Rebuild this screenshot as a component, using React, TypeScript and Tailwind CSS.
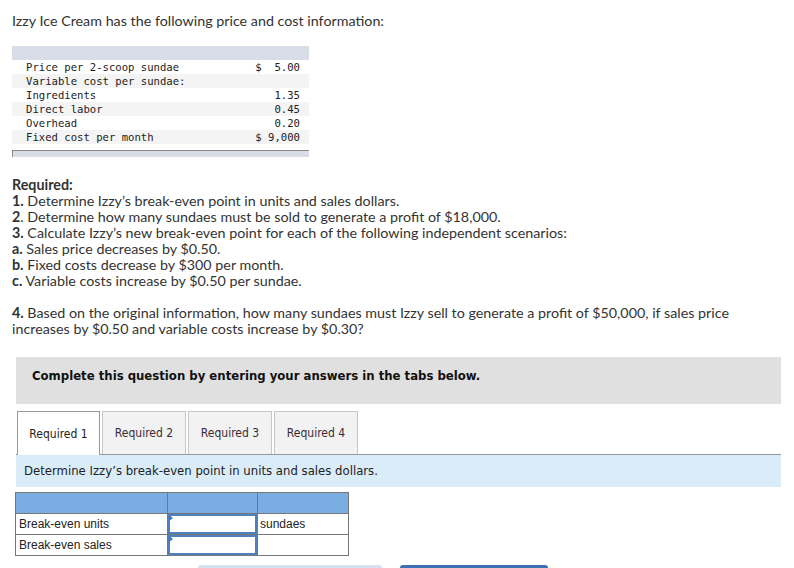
const costRows = [
  { label: 'Price per 2-scoop sundae', value: '$  5.00' },
  { label: 'Variable cost per sundae:', value: '' },
  { label: 'Ingredients', value: '1.35' },
  { label: 'Direct labor', value: '0.45' },
  { label: 'Overhead', value: '0.20' },
  { label: 'Fixed cost per month', value: '$ 9,000' },
]

const tabs = ['Required 1', 'Required 2', 'Required 3', 'Required 4']

function CostTable() {
  return (
    <div className="ml-3 mt-[17px] w-[297px] font-['DejaVu_Sans_Mono',monospace] text-[10.6px] leading-[14px] text-[#222]">
      <div className="h-[14px] bg-[#d9dde8]" />
      {costRows.map((row, i) => (
        <div
          key={row.label}
          className={`flex h-[14px] justify-between pl-[14px] pr-[9px] ${i % 2 === 1 ? 'bg-[#f4f4f4]' : 'bg-white'}`}
        >
          <span>{row.label}</span>
          <span className="whitespace-pre">{row.value}</span>
        </div>
      ))}
      <div className="mt-[6px] h-[7px] border-l border-t border-[#8a8a8a] bg-[#d9dde8]" />
    </div>
  )
}

function Required() {
  return (
    <div className="mt-5 w-[770px] pl-3 text-[14.3px] leading-4">
      <p className="font-bold">Required:</p>
      <p><b>1.</b> Determine Izzy’s break-even point in units and sales dollars.</p>
      <p><b>2</b>. Determine how many sundaes must be sold to generate a profit of $18,000.</p>
      <p><b>3.</b> Calculate Izzy’s new break-even point for each of the following independent scenarios:</p>
      <p><b>a.</b> Sales price decreases by $0.50.</p>
      <p><b>b.</b> Fixed costs decrease by $300 per month.</p>
      <p><b>c.</b> Variable costs increase by $0.50 per sundae.</p>
      <p className="mt-4">
        <b>4.</b> Based on the original information, how many sundaes must Izzy sell to generate a profit of $50,000, if sales price increases by $0.50 and variable costs increase by $0.30?
      </p>
    </div>
  )
}

function InputCell() {
  return (
    <div className="relative border-b border-r border-[#777] bg-white">
      <div className="h-full w-full border-2 border-[#4f80be]" />
      <span className="absolute left-[1px] top-[1px] h-0 w-0 border-y-[3px] border-l-[4px] border-y-transparent border-l-[#3f74b8]" />
    </div>
  )
}

function AnswerTable() {
  return (
    <div className="ml-[15px] mt-[5px] grid w-fit grid-cols-[152px_90px_91px] grid-rows-[21px_21px_21px] border-l border-t border-[#777] font-['Liberation_Sans',Arial,sans-serif] text-[12px] leading-[20px] text-[#222]">
      <div className="border-b border-r border-[#777] bg-[#7aaee3]" />
      <div className="border-b border-r border-[#777] bg-[#7aaee3]" />
      <div className="border-b border-r border-[#777] bg-[#7aaee3]" />
      <div className="border-b border-r border-[#777] pl-[3px]">Break-even units</div>
      <InputCell />
      <div className="border-b border-r border-[#777] pl-[2px]">sundaes</div>
      <div className="border-b border-r border-[#777] pl-[3px]">Break-even sales</div>
      <InputCell />
      <div className="border-b border-r border-[#777]" />
    </div>
  )
}

export default function App() {
  return (
    <div className="h-[568px] w-[794px] overflow-hidden bg-white font-['Lato',sans-serif] text-[#333]">
      <p className="pl-3 pt-[13px] text-[14.3px] leading-4">Izzy Ice Cream has the following price and cost information:</p>
      <CostTable />
      <Required />

      <div className="ml-4 mt-5 h-[47px] w-[765px] bg-[#e0e0e0] pl-4 pt-[11px] font-['DejaVu_Sans_Condensed','DejaVu_Sans',sans-serif] text-[13px] font-bold leading-4 text-[#111]">
        Complete this question by entering your answers in the tabs below.
      </div>

      <div className="ml-4 mt-[7px] flex w-[765px] items-start gap-[2px] border-b border-[#999] pl-px font-['DejaVu_Sans_Condensed','DejaVu_Sans',sans-serif] text-[12px]">
        {tabs.map((t, i) =>
          i === 0 ? (
            <div key={t} className="-mb-px flex h-[44px] w-[83px] items-center justify-center border-x border-t border-[#999] bg-white text-[#222]">
              {t}
            </div>
          ) : (
            <div key={t} className="flex h-[43px] w-[84px] items-center justify-center border-x border-t border-[#c6c6c6] bg-[#f2f2f2] text-[#3a2a36]">
              {t}
            </div>
          )
        )}
      </div>

      <div className="ml-4 flex h-[32px] w-[765px] items-center bg-[#dbecf9] pl-2 font-['DejaVu_Sans_Condensed','DejaVu_Sans',sans-serif] text-[13px] text-[#222]">
        Determine Izzy’s break-even point in units and sales dollars.
      </div>

      <AnswerTable />

      <div className="ml-[198px] mt-[9px] flex gap-[18px]">
        <div className="h-8 w-[184px] rounded-t-[3px] bg-[#d6e2f1]" />
        <div className="h-8 w-[148px] rounded-t-[3px] bg-[#3b70b3]" />
      </div>
    </div>
  )
}
